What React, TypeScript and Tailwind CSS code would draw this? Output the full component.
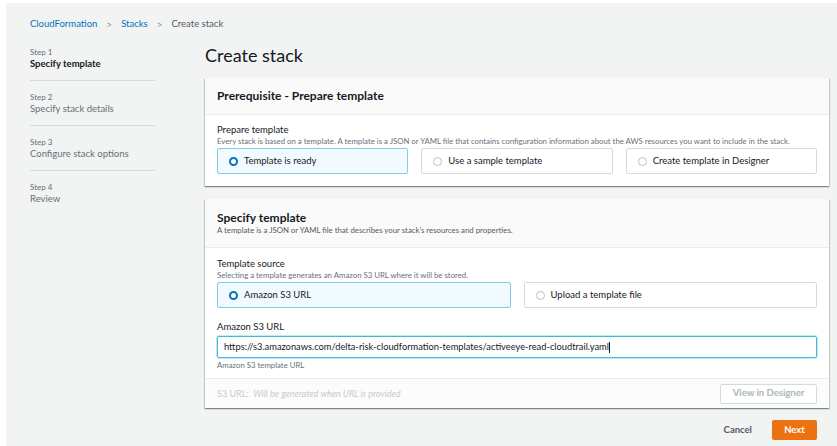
import React from "react";

const font = { fontFamily: "Lato, 'Noto Sans', sans-serif" };

const steps = [
  { step: "Step 1", label: "Specify template", active: true },
  { step: "Step 2", label: "Specify stack details" },
  { step: "Step 3", label: "Configure stack options" },
  { step: "Step 4", label: "Review" },
];

function Radio({ checked }: { checked?: boolean }) {
  return checked ? (
    <span className="w-[9px] h-[9px] rounded-full border-[2.5px] border-[#0073bb] bg-white shrink-0" />
  ) : (
    <span className="w-[9px] h-[9px] rounded-full border border-[#b8c3c4] bg-white shrink-0" />
  );
}

function Tile({ label, checked }: { label: string; checked?: boolean }) {
  return (
    <div
      className={`flex-1 h-[26px] flex items-center gap-[6px] pl-[11px] rounded-[2px] border ${
        checked ? "bg-[#f1faff] border-[#7fcde4]" : "bg-white border-[#d5dbdb]"
      }`}
    >
      <Radio checked={checked} />
      <span className="text-[9.5px] text-[#16191f]">{label}</span>
    </div>
  );
}

function Card({ children }: { children: React.ReactNode }) {
  return (
    <div className="bg-white shadow-[0_1px_1px_0_rgba(0,28,36,0.3),1px_1px_1px_0_rgba(0,28,36,0.15),-1px_1px_1px_0_rgba(0,28,36,0.15)]">
      {children}
    </div>
  );
}

export default function App() {
  return (
    <div className="w-[837px] h-[446px] bg-white overflow-hidden" style={font}>
      <div className="ml-[6px] mt-[3px] h-[443px] bg-[#f2f3f3] pl-[24px]">
        {/* breadcrumb */}
        <div className="h-[40px] flex items-center gap-[9px] text-[9.5px] pt-[2px]">
          <span className="text-[#0073bb]">CloudFormation</span>
          <span className="text-[#879596] text-[10px]">&gt;</span>
          <span className="text-[#0073bb]">Stacks</span>
          <span className="text-[#879596] text-[10px]">&gt;</span>
          <span className="text-[#545b64]">Create stack</span>
        </div>

        <div className="flex gap-[50px]">
          {/* steps */}
          <div className="w-[125px] pt-[3px]">
            {steps.map((s, i) => (
              <div
                key={s.step}
                className={`${i < 3 ? "border-b border-[#d5dbdb] pb-[10px]" : ""} ${i > 0 ? "pt-[10px]" : ""}`}
              >
                <div className="text-[8px] leading-[12px] text-[#687078]">{s.step}</div>
                <div
                  className={`text-[9.5px] leading-[12px] ${
                    s.active ? "font-bold text-[#16191f]" : "text-[#687078]"
                  }`}
                >
                  {s.label}
                </div>
              </div>
            ))}
          </div>

          {/* main */}
          <div className="w-[624px]">
            <h1 className="text-[18px] leading-[30px] text-[#16191f] -mt-[3px] h-[38px]">Create stack</h1>

            <Card>
              <div className="h-[37px] bg-[#fafafa] border-b border-[#eaeded] flex items-center px-[12px]">
                <span className="text-[12px] font-bold text-[#16191f]">Prerequisite - Prepare template</span>
              </div>
              <div className="px-[12px] pt-[9px] pb-[12px]">
                <div className="text-[9.5px] leading-[12px] text-[#16191f]">Prepare template</div>
                <div className="text-[7.8px] leading-[10px] text-[#687078]">
                  Every stack is based on a template. A template is a JSON or YAML file that contains configuration
                  information about the AWS resources you want to include in the stack.
                </div>
                <div className="flex gap-[13px] mt-[2px]">
                  <Tile label="Template is ready" checked />
                  <Tile label="Use a sample template" />
                  <Tile label="Create template in Designer" />
                </div>
              </div>
            </Card>

            <div className="h-[13px]" />

            <Card>
              <div className="h-[49px] bg-[#fafafa] border-b border-[#eaeded] px-[12px] pt-[12px]">
                <div className="text-[12px] leading-[14px] font-bold text-[#16191f]">Specify template</div>
                <div className="text-[7.8px] leading-[11px] text-[#545b64]">
                  A template is a JSON or YAML file that describes your stack's resources and properties.
                </div>
              </div>
              <div className="px-[12px] pt-[10px] pb-[6px]">
                <div className="text-[9.5px] leading-[12px] text-[#16191f]">Template source</div>
                <div className="text-[7.8px] leading-[10px] text-[#687078]">
                  Selecting a template generates an Amazon S3 URL where it will be stored.
                </div>
                <div className="flex gap-[13px] mt-[2px]">
                  <Tile label="Amazon S3 URL" checked />
                  <Tile label="Upload a template file" />
                </div>
                <div className="text-[9.5px] leading-[12px] text-[#16191f] mt-[13px]">Amazon S3 URL</div>
                <div className="mt-[3px] h-[22px] border border-[#44b9d6] rounded-[2px] shadow-[0_0_1px_1px_rgba(0,161,201,0.25)] flex items-center pl-[6px]">
                  <span className="text-[9.3px] text-[#16191f]">
                    https://s3.amazonaws.com/delta-risk-cloudformation-templates/activeeye-read-cloudtrail.yaml
                  </span>
                  <span className="w-[1px] h-[11px] bg-[#16191f]" />
                </div>
                <div className="text-[7.8px] leading-[14px] text-[#687078]">Amazon S3 template URL</div>
              </div>
              <div className="h-[30px] border-t border-[#eaeded] bg-[#fcfcfc] px-[12px] flex items-center justify-between">
                <span className="text-[9px] text-[#c3cbcb]">
                  S3 URL:&nbsp; <i>Will be generated when URL is provided</i>
                </span>
                <span className="h-[20px] w-[97px] border border-[#d5dbdb] rounded-[2px] bg-white flex items-center justify-center text-[9.5px] font-bold text-[#aab7b8]">
                  View in Designer
                </span>
              </div>
            </Card>

            <div className="flex justify-end items-center gap-[20px] mt-[12px] pr-[12px]">
              <span className="text-[9.5px] font-bold text-[#545b64]">Cancel</span>
              <span className="h-[20px] w-[45px] rounded-[2px] bg-[#ec7211] flex items-center justify-center text-[9.5px] font-bold text-white">
                Next
              </span>
            </div>
          </div>
        </div>
      </div>
    </div>
  );
}
